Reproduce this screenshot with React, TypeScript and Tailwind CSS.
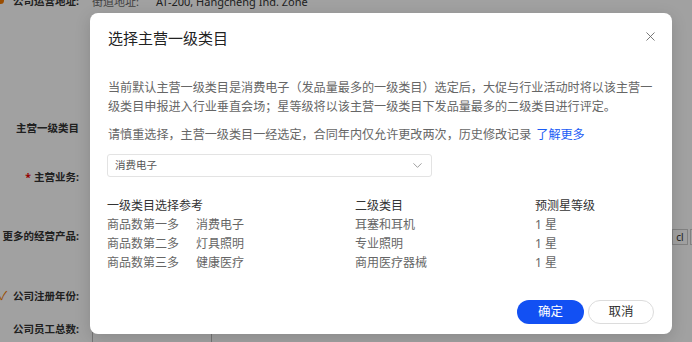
import React from "react";
import { X, ChevronDown } from "lucide-react";

const rows = [
  ["商品数第一多", "消费电子", "耳塞和耳机", "1 星"],
  ["商品数第二多", "灯具照明", "专业照明", "1 星"],
  ["商品数第三多", "健康医疗", "商用医疗器械", "1 星"],
];

function Label({ children }: { children: React.ReactNode }) {
  return (
    <div className="w-[79px] shrink-0 text-right text-[10.5px] font-bold text-[#333] whitespace-nowrap">
      {children}
    </div>
  );
}

export default function App() {
  return (
    <div className="relative w-[692px] h-[342px] overflow-hidden bg-white font-['Noto_Sans','Noto_Sans_CJK_SC',sans-serif]">
      {/* background page */}
      <div className="flex flex-col">
        <div className="flex items-center h-[14px] -mt-[5px]">
          <div className="relative w-[79px] shrink-0 text-right text-[10.5px] font-bold text-[#333] whitespace-nowrap">
            <span className="absolute left-[-3px] top-[3px] w-[7px] h-[7px] rounded-full bg-[#f47a00]" />
            公司运营地址:
          </div>
          <div className="ml-[13px] text-[11px] text-[#666]">街道地址:</div>
          <div className="ml-[17px] text-[11px] text-[#333]">AT-200, Hangcheng Ind. Zone</div>
        </div>
        <div className="flex items-center h-[20px] mt-[110px]">
          <Label>主营一级类目</Label>
        </div>
        <div className="flex items-center h-[20px] mt-[29px]">
          <Label>
            <span className="text-[#e00] mr-[3px]">*</span>主营业务:
          </Label>
        </div>
        <div className="flex items-center h-[20px] mt-[39px]">
          <Label>更多的经营产品:</Label>
          <div className="ml-auto flex gap-[2px] mr-[-14px]">
            <div className="w-[16px] h-[16px] border border-[#ccc] text-[10px] leading-[14px] text-center text-[#333]">cl</div>
            <div className="w-[16px] h-[16px] border border-[#ccc]" />
          </div>
        </div>
        <div className="flex items-center h-[20px] mt-[40px]">
          <div className="relative w-[79px] shrink-0 text-right text-[10.5px] font-bold text-[#333] whitespace-nowrap">
            <span className="absolute left-[-1px] top-[-2px] text-[12px] font-normal text-[#f47a00]">✓</span>
            公司注册年份:
          </div>
        </div>
        <div className="flex items-center h-[20px] mt-[13px]">
          <Label>公司员工总数:</Label>
          <div className="ml-[13px] w-[120px] h-[26px] border border-[#bbb] mt-[10px]" />
        </div>
      </div>

      {/* overlay */}
      <div className="absolute inset-0 bg-black/[0.37]" />

      {/* modal */}
      <div className="absolute left-[90px] top-[13px] w-[582px] h-[321px] bg-white rounded-[8px] shadow-[0_4px_16px_rgba(0,0,0,0.15)] flex flex-col px-[17px] pb-[10px]">
        <div className="flex items-center justify-between pt-[15px] h-[35px]">
          <div className="text-[15px] leading-[20px] text-[#222] pl-[1px]">选择主营一级类目</div>
          <X size={15} strokeWidth={1.4} className="text-[#666] mr-[-3px] mt-[-4px]" />
        </div>
        <p className="mt-[30px] w-[550px] pl-[1px] text-[12.1px] leading-[19px] text-[#666]">
          当前默认主营一级类目是消费电子（发品量最多的一级类目）选定后，大促与行业活动时将以该主营一级类目申报进入行业垂直会场；星等级将以该主营一级类目下发品量最多的二级类目进行评定。
        </p>
        <p className="mt-[9px] pl-[1px] text-[12.1px] leading-[19px] text-[#666]">
          请慎重选择，主营一级类目一经选定，合同年内仅允许更改两次，历史修改记录
          <span className="ml-[5px] text-[#1a5cf5]">了解更多</span>
        </p>
        <div className="mt-[10px] w-[325px] h-[23px] border border-[#e3e3e3] rounded-[3px] flex items-center justify-between pl-[7px] pr-[6px]">
          <span className="text-[10.5px] text-[#555]">消费电子</span>
          <ChevronDown size={15} strokeWidth={1.3} className="text-[#888]" />
        </div>
        <div className="mt-[19px] grid grid-cols-[89px_159px_180px_1fr] text-[12px] leading-[19px]">
          <div className="col-span-2 text-[#333]">一级类目选择参考</div>
          <div className="text-[#333]">二级类目</div>
          <div className="text-[#333]">预测星等级</div>
          {rows.map((r) => (
            <React.Fragment key={r[0]}>
              <div className="text-[#666]">{r[0]}</div>
              <div className="text-[#666]">{r[1]}</div>
              <div className="text-[#666]">{r[2]}</div>
              <div className="text-[#666]">{r[3]}</div>
            </React.Fragment>
          ))}
        </div>
        <div className="mt-auto flex justify-end gap-[4px] pr-[1px]">
          <button className="w-[67px] h-[24px] rounded-full bg-[#1250f3] text-white text-[12.5px]">确定</button>
          <button className="w-[66px] h-[24px] rounded-full border border-[#dcdcdc] bg-white text-[#333] text-[12.5px]">取消</button>
        </div>
      </div>
    </div>
  );
}
